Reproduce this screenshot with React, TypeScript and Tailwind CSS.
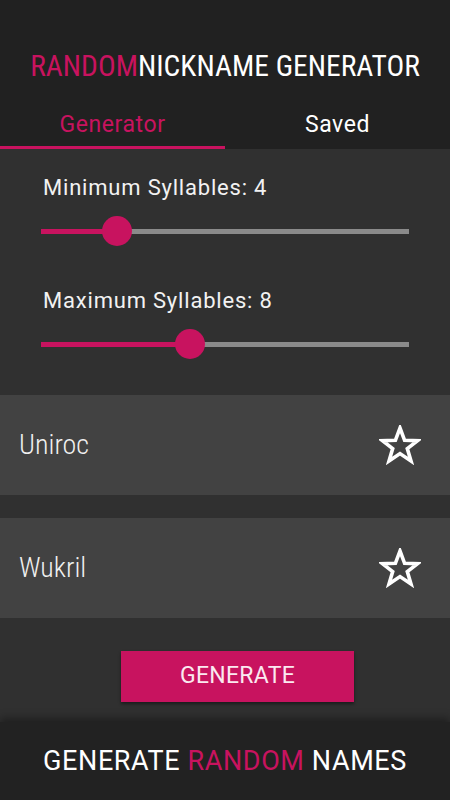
const PINK = '#c8135f'

function Star() {
  return (
    <svg width="42" height="40" viewBox="0 0 42 40" fill="none">
      <polygon
        points="21,3 25.6,15.3 38.5,15.6 28.3,23.6 32,36 21,28.6 10,36 13.7,23.6 3.5,15.6 16.4,15.3"
        stroke="#ffffff"
        strokeWidth="3.6"
        strokeLinejoin="miter"
      />
    </svg>
  )
}

function Slider({ label, pos }: { label: string; pos: number }) {
  return (
    <div className="flex flex-col">
      <span className="pl-[2px] text-[22px] leading-[26px] text-[#f2f2f2] tracking-[0.8px]">{label}</span>
      <div className="relative mt-[15px] h-[30px] flex items-center">
        <div className="flex w-full h-[5px]">
          <div className="h-full bg-[#c8135f]" style={{ width: pos }} />
          <div className="h-full flex-1 bg-[#8a8a8a]" />
        </div>
        <div
          className="absolute top-0 w-[30px] h-[30px] rounded-full bg-[#c8135f]"
          style={{ left: pos - 15 }}
        />
      </div>
    </div>
  )
}

function NameCard({ name }: { name: string }) {
  return (
    <div className="h-[100px] bg-[#424242] flex items-center justify-between pl-[19px] pr-[29px]">
      <span className="text-[28px] font-light text-[#f0f0f0]" style={{ fontStretch: 'condensed' }}>{name}</span>
      <Star />
    </div>
  )
}

export default function App() {
  return (
    <div className="w-[450px] h-[800px] flex flex-col bg-[#303030] overflow-hidden" style={{ fontFamily: 'Roboto, "Noto Sans", sans-serif' }}>
      <div className="bg-[#212121] flex flex-col">
        <div className="h-[104px] flex items-end justify-center pb-[22px]">
          <h1 className="text-[29.5px] leading-[32px] text-white" style={{ fontStretch: 'condensed' }}>
            <span className="text-[#c8135f]">RANDOM</span>NICKNAME GENERATOR
          </h1>
        </div>
        <div className="flex h-[45px]">
          <div className="flex-1 flex flex-col">
            <div className="flex-1 flex items-center justify-center text-[23px] text-[#c8135f] tracking-[0.6px]">Generator</div>
            <div className="h-[3px] bg-[#c8135f]" />
          </div>
          <div className="flex-1 flex flex-col">
            <div className="flex-1 flex items-center justify-center text-[23px] text-white tracking-[0.6px] pb-[3px]">Saved</div>
          </div>
        </div>
      </div>

      <div className="flex-1 flex flex-col">
        <div className="px-[41px] pt-[26px] pb-[36px] flex flex-col gap-[42px]">
          <Slider label="Minimum Syllables: 4" pos={76} />
          <Slider label="Maximum Syllables: 8" pos={149} />
        </div>
        <div className="flex flex-col gap-[23px]">
          <NameCard name="Uniroc" />
          <NameCard name="Wukril" />
        </div>
        <div className="flex justify-center pt-[33px] pl-[25px]">
          <button className="w-[233px] h-[51px] bg-[#c8135f] text-[23px] text-[#fbe9f0] tracking-[0.3px] shadow-[0_2px_3px_rgba(0,0,0,0.45)]">
            GENERATE
          </button>
        </div>
      </div>

      <div className="h-[78px] bg-[#222222] flex items-center justify-center shadow-[0_-4px_8px_rgba(0,0,0,0.35)]">
        <span className="text-[27px] text-white tracking-[0.6px]">
          GENERATE <span style={{ color: PINK }}>RANDOM</span> NAMES
        </span>
      </div>
    </div>
  )
}
